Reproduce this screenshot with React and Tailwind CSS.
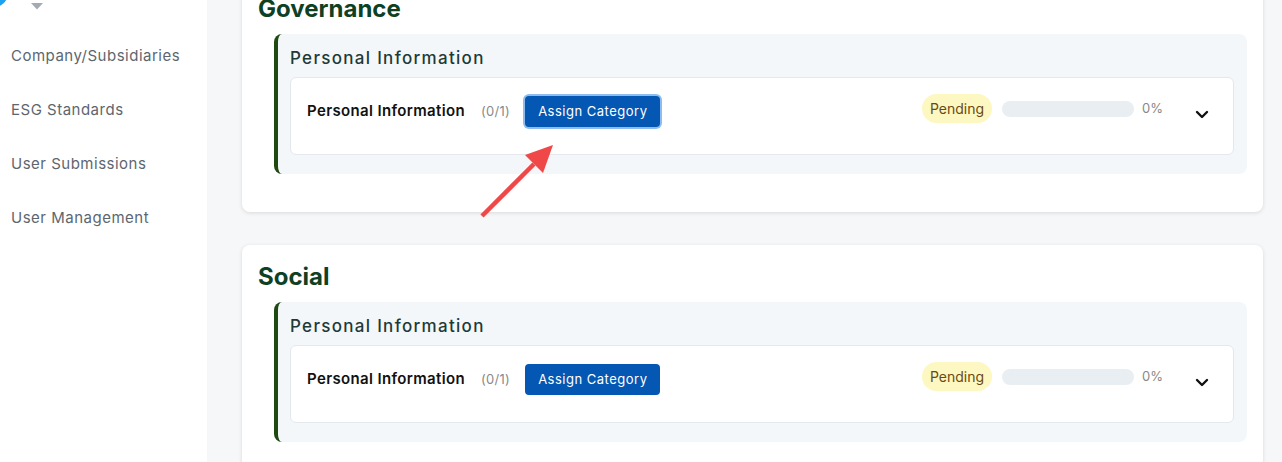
import React from 'react';

const sideItems = ['Company/Subsidiaries', 'ESG Standards', 'User Submissions', 'User Management'];

const sections = [
  { title: 'Governance', focused: true },
  { title: 'Social', focused: false },
];

function Chevron() {
  return (
    <svg width="16" height="16" viewBox="0 0 16 16" className="text-[#111]">
      <path d="M3 6l5 5 5-5" fill="none" stroke="currentColor" strokeWidth="2.4" strokeLinecap="round" strokeLinejoin="round" />
    </svg>
  );
}

function CategoryRow({ focused }) {
  return (
    <div className="flex items-start justify-between bg-white border border-[#e4e8ec] rounded-md pl-4 pr-[23px] pt-4 pb-[27px]">
      {/* Left side */}
      <div className="flex items-center mt-[2px]">
        <span className="text-[15px] font-semibold tracking-[0.35px] text-[#111]">Personal Information</span>
        <span className="ml-4 text-[13px] tracking-[0.3px] text-[#8a8a8a]">(0/1)</span>
        <button
          className={`ml-[15px] h-[31px] px-[13px] rounded bg-[#0457b3] text-white text-[13px] tracking-[0.5px] ${
            focused ? 'ring-2 ring-[#8fbcef]' : ''
          }`}
        >
          Assign Category
        </button>
      </div>

      {/* Right side */}
      <div className="flex items-start">
        <div className="flex items-center">
          <span className="h-[29px] px-2 flex items-center rounded-full bg-[#fdf8c1] text-[14px] text-[#6b4a12]">Pending</span>
          <div className="ml-[10px] w-[132px] h-4 rounded-full bg-[#e9eef2]"></div>
          <span className="ml-2 text-[13px] text-[#888]">0%</span>
        </div>
        <div className="ml-[31px] mt-[12px]">
          <Chevron />
        </div>
      </div>
    </div>
  );
}

function SectionCard({ title, focused }) {
  return (
    <div className="bg-white rounded-lg shadow-[0_1px_4px_rgba(0,0,0,0.12)] px-4 pt-4 pb-[38px]">
      <h2 className="text-2xl leading-8 font-bold text-[#0e4123]">{title}</h2>
      <div className="mt-[9px] ml-4 bg-[#f4f7fa] border-l-4 border-[#1e4a12] rounded-lg pl-3 pr-[13px] pt-[14px] pb-[19px]">
        <h3 className="text-[17px] leading-5 font-medium tracking-[1.3px] text-[#1e3a36]">Personal Information</h3>
        <div className="mt-[9px]">
          <CategoryRow focused={focused} />
        </div>
      </div>
    </div>
  );
}

export default function App() {
  return (
    <div className="relative flex h-[462px] overflow-hidden bg-[#f5f7f9] font-['Inter',sans-serif]">
      {/* Sidebar */}
      <aside className="w-[207px] shrink-0 bg-white">
        <div className="flex items-start h-[29px]">
          <div className="w-7 h-7 rounded-full bg-[#1da1f2] -ml-5 -mt-[21px]"></div>
          <svg width="12" height="7" viewBox="0 0 12 7" className="ml-[23px] mt-[3px]">
            <path d="M0 0h12L6 6.5z" fill="#a3aab3" />
          </svg>
        </div>
        <nav className="flex flex-col">
          {sideItems.map((item) => (
            <div key={item} className="h-[54px] flex items-center pl-[11px] text-[15px] tracking-[0.5px] text-[#5d666e]">
              {item}
            </div>
          ))}
        </nav>
      </aside>

      {/* Main */}
      <main className="flex-1 pl-[35px] pr-[19px]">
        <div className="-mt-[23px] flex flex-col gap-[33px]">
          {sections.map((s) => (
            <SectionCard key={s.title} title={s.title} focused={s.focused} />
          ))}
        </div>
      </main>

      {/* Annotation arrow */}
      <svg className="absolute left-[470px] top-[135px]" width="95" height="95" viewBox="0 0 95 95">
        <line x1="12" y1="81" x2="64" y2="29" stroke="#f04848" strokeWidth="4.5" />
        <path d="M83 10L55 20L73 38Z" fill="#f04848" />
      </svg>
    </div>
  );
}
